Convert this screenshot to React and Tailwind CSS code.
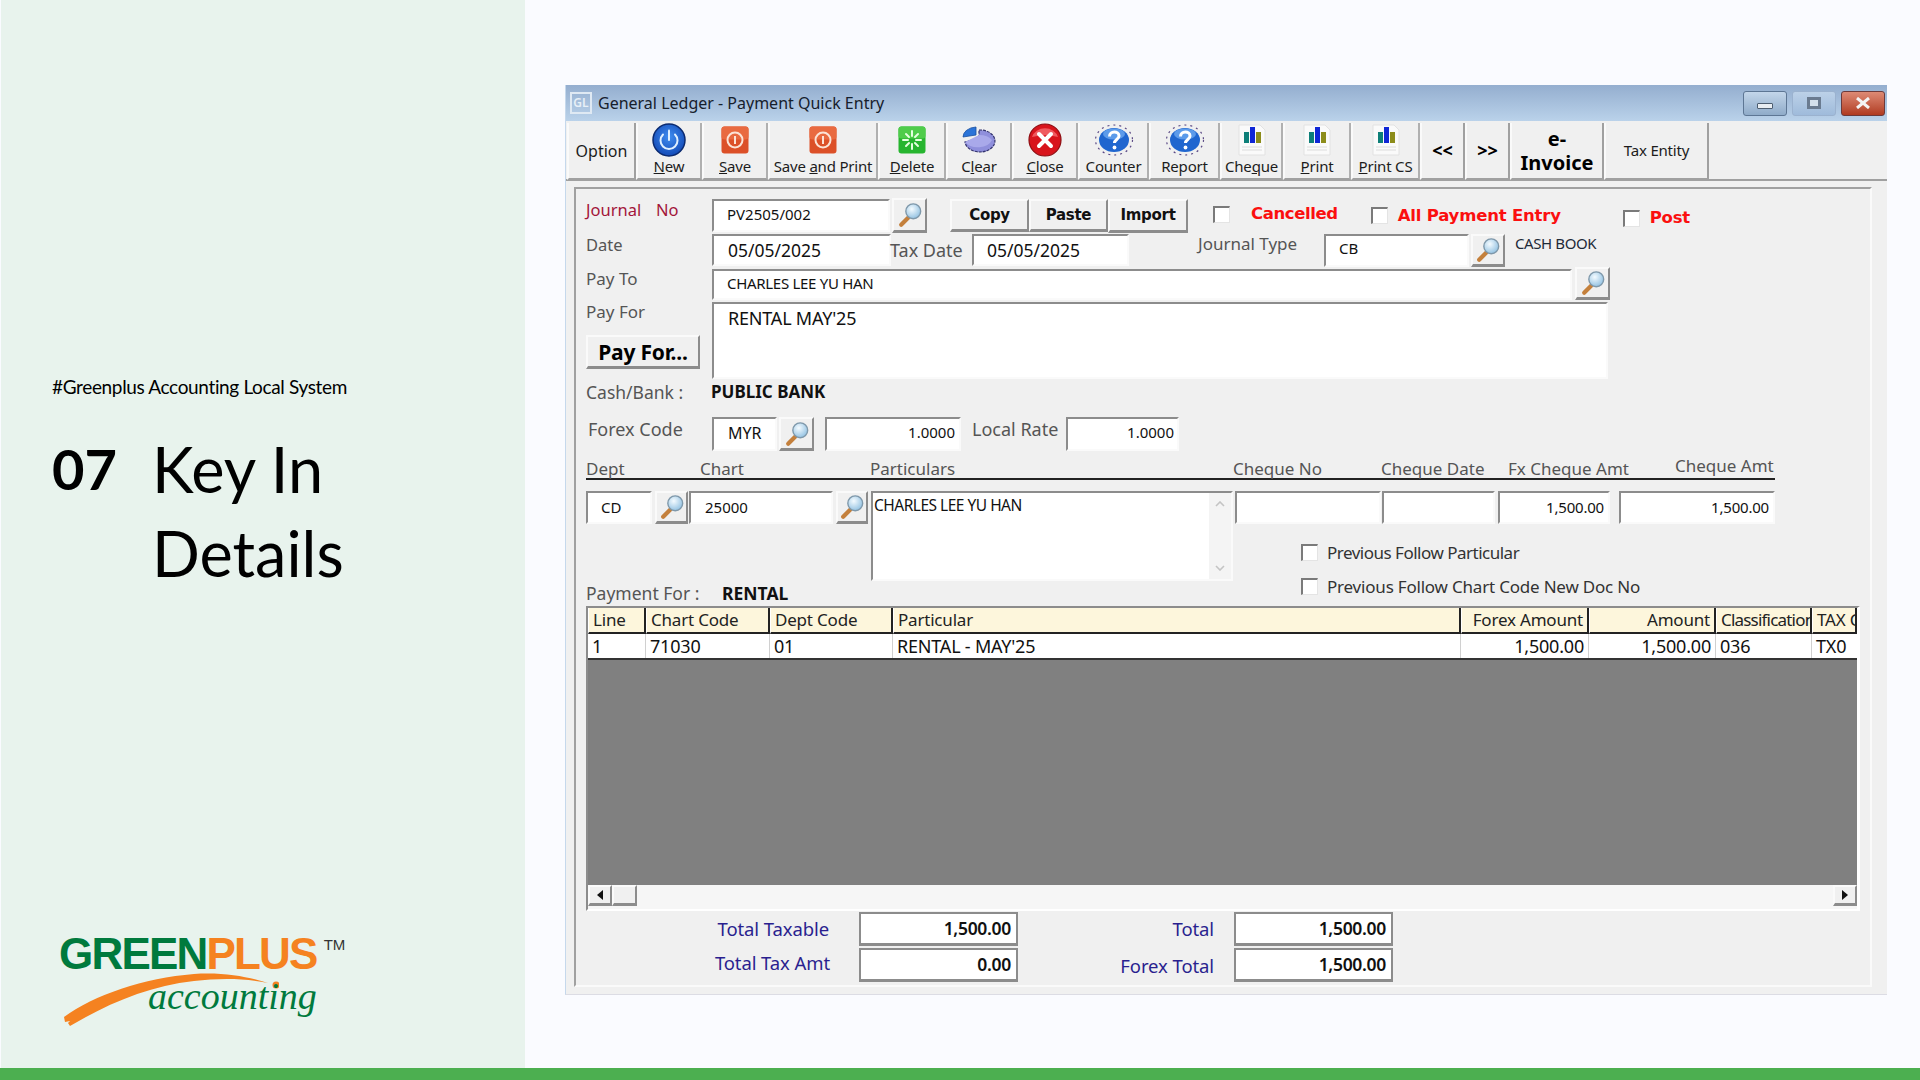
import React from 'react';

const inset = 'bg-white border-t-2 border-l-2 border-t-[#8c8c8c] border-l-[#8c8c8c] border-b-2 border-r-2 border-b-[#fafafa] border-r-[#fafafa]';
const raised = 'bg-[#f0f0f0] border-t-2 border-l-2 border-t-[#fafafa] border-l-[#fafafa] border-b-[3px] border-r-2 border-b-[#8c8c8c] border-r-[#8c8c8c]';

// magnifier used by all lookup buttons
const Mag = () => (
    <svg viewBox="0 0 28 28" className="w-[26px] h-[26px]">
        <defs>
            <radialGradient id="glass" cx="0.4" cy="0.35" r="0.8">
                <stop offset="0" stopColor="#f4fbff" />
                <stop offset="1" stopColor="#7fb6dc" />
            </radialGradient>
        </defs>
        <line x1="12" y1="17" x2="4.5" y2="24.5" stroke="#c4803c" strokeWidth="4.5" strokeLinecap="round" />
        <circle cx="17.5" cy="10" r="8" fill="url(#glass)" stroke="#7f98aa" strokeWidth="1.5" />
    </svg>
);

const SearchBtn = ({ className }) => (
    <button className={`${raised} flex items-center justify-center shrink-0 ${className}`}><Mag /></button>
);

const Box = ({ className, children }) => (
    <div className={`${inset} shrink-0 flex items-center whitespace-nowrap text-[#111] ${className}`}>{children}</div>
);

const Check = ({ className }) => (
    <span className={`inline-block w-[17px] h-[17px] bg-white border-t-2 border-l-2 border-t-[#7a7a7a] border-l-[#7a7a7a] border-b border-r border-b-[#e4e4e4] border-r-[#e4e4e4] shrink-0 ${className}`} />
);

const PowerIcon = () => (
    <svg viewBox="0 0 34 34" className="w-[34px] h-[34px]">
        <defs>
            <radialGradient id="pw" cx="0.5" cy="0.4" r="0.7">
                <stop offset="0" stopColor="#3f8df0" />
                <stop offset="1" stopColor="#0b3fae" />
            </radialGradient>
        </defs>
        <circle cx="17" cy="17" r="16" fill="url(#pw)" stroke="#0a2a70" strokeWidth="1.5" />
        <path d="M11 11.5a8.5 8.5 0 1 0 12 0" fill="none" stroke="#dff0ff" strokeWidth="2" strokeLinecap="round" />
        <line x1="17" y1="7.5" x2="17" y2="17" stroke="#dff0ff" strokeWidth="2" strokeLinecap="round" />
    </svg>
);

const SaveIcon = () => (
    <svg viewBox="0 0 28 28" className="w-[28px] h-[28px]">
        <rect x="0.5" y="0.5" width="27" height="27" rx="3" fill="#dc5028" />
        <rect x="0.5" y="0.5" width="27" height="13" rx="3" fill="#e96a40" />
        <circle cx="14" cy="14" r="7.5" fill="none" stroke="#fbe3d6" strokeWidth="2" />
        <line x1="14" y1="10" x2="14" y2="18" stroke="#fbe3d6" strokeWidth="2" />
    </svg>
);

const DeleteIcon = () => (
    <svg viewBox="0 0 28 28" className="w-[28px] h-[28px]">
        <rect x="0.5" y="0.5" width="27" height="27" rx="3" fill="#27b52f" />
        <rect x="0.5" y="0.5" width="27" height="12" rx="3" fill="#4fcc4a" />
        <g stroke="#e6ffe0" strokeWidth="2" strokeLinecap="round">
            <line x1="14" y1="5" x2="14" y2="10" />
            <line x1="14" y1="18" x2="14" y2="23" />
            <line x1="5" y1="14" x2="10" y2="14" />
            <line x1="18" y1="14" x2="23" y2="14" />
            <line x1="8" y1="8" x2="11" y2="11" />
            <line x1="17" y1="17" x2="20" y2="20" />
            <line x1="20" y1="8" x2="17" y2="11" />
            <line x1="11" y1="17" x2="8" y2="20" />
        </g>
    </svg>
);

const ClearIcon = () => (
    <svg viewBox="0 0 34 30" className="w-[34px] h-[30px]">
        <path d="M17 5 A15 11 0 1 1 3 17 L17 13 Z" fill="#8f8fdc" stroke="#34346e" strokeWidth="1.2" strokeDasharray="3 1" />
        <path d="M17 10 A15 11 0 0 1 30 15 A15 11 0 0 1 3 17 Z" fill="#a9a9ea" />
        <path d="M14 2 L14 10 L1 12 A14 10 0 0 1 14 2 Z" fill="#2b74d8" stroke="#1b4f9e" strokeWidth="0.8" />
    </svg>
);

const CloseIcon = () => (
    <svg viewBox="0 0 34 34" className="w-[34px] h-[34px]">
        <circle cx="17" cy="17" r="16" fill="#d8141c" stroke="#8e0d12" strokeWidth="1.2" />
        <path d="M4 14a13.5 12 0 0 1 26 0a30 16 0 0 0 -26 0Z" fill="#ef5a5f" />
        <path d="M11 11l12 12M23 11l-12 12" stroke="#fff" strokeWidth="4" strokeLinecap="round" />
    </svg>
);

const HelpIcon = () => (
    <svg viewBox="0 0 40 32" className="w-[40px] h-[32px]">
        <ellipse cx="20" cy="16" rx="18.5" ry="15" fill="none" stroke="#5b4a86" strokeWidth="1.2" strokeDasharray="2 4" />
        <ellipse cx="20" cy="16" rx="15" ry="12" fill="#1f66cf" />
        <ellipse cx="20" cy="10" rx="11" ry="5.5" fill="#5c9bea" />
        <path d="M15.5 12.5c0-6 9.5-6 9.5-.5c0 3.5-4.5 3.5-4.5 7" fill="none" stroke="#fff" strokeWidth="3" />
        <circle cx="20.5" cy="23.5" r="1.9" fill="#fff" />
    </svg>
);

const DocIcon = () => (
    <svg viewBox="0 0 28 32" className="w-[28px] h-[32px]">
        <path d="M1 1h21l5 5v25H1Z" fill="#fafafa" stroke="#e2e2e2" />
        <rect x="6" y="8" width="5" height="11" fill="#0d7f78" />
        <rect x="12" y="3" width="5" height="16" fill="#0f26d6" />
        <rect x="18" y="8" width="5" height="11" fill="#8c8c1a" />
        <g stroke="#dcdcdc">
            <line x1="4" y1="23" x2="24" y2="23" />
            <line x1="4" y1="26" x2="24" y2="26" />
        </g>
    </svg>
);

const ToolBtn = ({ className, icon, children }) => (
    <div className={`h-[57px] shrink-0 flex flex-col items-center bg-[#f0f0f0] border-l-2 border-l-[#fafafa] border-r-2 border-r-[#b0b0b0] border-b-2 border-b-[#a0a0a0] ${className}`}>
        <div className="h-[34px] flex items-center justify-center">{icon}</div>
        <div className="text-[15px] leading-[18px] text-[#1c1c1c] whitespace-nowrap tracking-[-0.2px]">{children}</div>
    </div>
);

const TextBtn = ({ className, children }) => (
    <div className={`h-[57px] shrink-0 flex items-center justify-center text-center bg-[#f0f0f0] border-l-2 border-l-[#fafafa] border-r-2 border-r-[#a0a0a0] border-b-2 border-b-[#a0a0a0] ${className}`}>{children}</div>
);

const WinBtn = ({ className, children }) => (
    <div className={`h-[25px] flex items-center justify-center rounded-[3px] border border-[#5d7694] ${className}`}>{children}</div>
);

const Logo = () => (
    <div className="relative ml-[7px] w-[300px] mb-[52px] font-['Liberation_Sans',sans-serif]">
        <svg viewBox="0 0 220 100" className="absolute left-0 top-0 w-[220px] h-[100px]">
            <path d="M5 86C35 64 85 47 135 43C165 41 190 46 209 52C185 47 160 47 135 50C90 55 50 72 11 95L9 92L11 90L6 91Z" fill="#f58220" />
            <circle cx="217" cy="54" r="3.5" fill="#f58220" />
        </svg>
        <div className="flex items-start">
            <div className="text-[44px] leading-[46px] font-bold tracking-[-1.8px]">
                <span className="text-[#007a3d]">GREEN</span><span className="text-[#f58220]">PLUS</span>
            </div>
            <span className="ml-[7px] mt-[6px] text-[15px] leading-[16px] text-[#333]">TM</span>
        </div>
        <div className="relative -mt-[1px] pl-[89px] text-[38px] leading-[40px] italic text-[#007a3d] font-['Liberation_Serif',serif]">accounting</div>
    </div>
);

const Sidebar = () => (
    <aside className="ml-px w-[524px] h-full flex flex-col bg-[#e8f3ed] pl-[51px] text-black">
        <div className="mt-[375px] text-[19px] leading-[24px] font-['Lato',sans-serif] tracking-[-0.35px]">#Greenplus Accounting Local System</div>
        <div className="mt-[28px] flex items-start font-['Lato',sans-serif] text-[63px] leading-[84px]">
            <div className="w-[100px] text-[56px] font-bold">07</div>
            <div>Key In<br />Details</div>
        </div>
        <div className="mt-auto"><Logo /></div>
    </aside>
);

const TitleBar = () => (
    <div className="h-[36px] flex items-center bg-gradient-to-b from-[#94aecf] to-[#bad2ea] pl-[4px] pr-[2px]">
        <div className="w-[22px] h-[22px] border-2 border-[#dfe9f3] flex items-center justify-center text-[#e8f0f7] text-[12px] font-semibold">GL</div>
        <div className="ml-[6px] text-[16px] text-[#16202c]">General Ledger - Payment Quick Entry</div>
        <div className="ml-auto flex gap-[5px]">
            <WinBtn className="w-[44px] bg-gradient-to-b from-[#c3d6ea] to-[#8fabc9]">
                <span className="block w-[16px] h-[6px] mt-[6px] bg-[#e8edf2] border border-[#4d5d70] rounded-[1px]" />
            </WinBtn>
            <WinBtn className="w-[44px] bg-gradient-to-b from-[#bcd1e8] to-[#9fbbdb] border-[#9bb2cf]">
                <span className="block w-[14px] h-[12px] border-[3px] border-[#6a7b90] bg-[#d4e0ec]" />
            </WinBtn>
            <WinBtn className="w-[44px] bg-gradient-to-b from-[#dd8a74] to-[#b03a20] border-[#6d3a3a]">
                <svg viewBox="0 0 16 12" className="w-[16px] h-[12px]"><path d="M2 1l12 10M14 1L2 11" stroke="#f4f4f4" strokeWidth="3" /></svg>
            </WinBtn>
        </div>
    </div>
);

const Toolbar = () => (
    <div className="h-[60px] pt-[2px] pl-[1px] flex bg-[#f0f0f0] border-b-2 border-b-[#a0a0a0] font-['Noto_Sans',sans-serif]">
        <TextBtn className="w-[69px] text-[16px] text-[#1c1c1c]">Option</TextBtn>
        <ToolBtn className="w-[66px]" icon={<PowerIcon />}><u>N</u>ew</ToolBtn>
        <ToolBtn className="w-[66px]" icon={<SaveIcon />}><u>S</u>ave</ToolBtn>
        <ToolBtn className="w-[110px]" icon={<SaveIcon />}>Save <u>a</u>nd Print</ToolBtn>
        <ToolBtn className="w-[68px]" icon={<DeleteIcon />}><u>D</u>elete</ToolBtn>
        <ToolBtn className="w-[66px]" icon={<ClearIcon />}>C<u>l</u>ear</ToolBtn>
        <ToolBtn className="w-[66px]" icon={<CloseIcon />}><u>C</u>lose</ToolBtn>
        <ToolBtn className="w-[71px]" icon={<HelpIcon />}>Counter</ToolBtn>
        <ToolBtn className="w-[71px]" icon={<HelpIcon />}>Report</ToolBtn>
        <ToolBtn className="w-[63px]" icon={<DocIcon />}>Che<u>q</u>ue</ToolBtn>
        <ToolBtn className="w-[68px]" icon={<DocIcon />}><u>P</u>rint</ToolBtn>
        <ToolBtn className="w-[69px]" icon={<DocIcon />}><u>P</u>rint CS</ToolBtn>
        <TextBtn className="w-[45px] text-[18px] font-bold">&lt;&lt;</TextBtn>
        <TextBtn className="w-[45px] text-[18px] font-bold">&gt;&gt;</TextBtn>
        <TextBtn className="w-[94px] text-[20px] leading-[24px] font-bold">e-<br />Invoice</TextBtn>
        <TextBtn className="w-[105px] text-[15px] text-[#1c1c1c] tracking-[-0.2px]">Tax Entity</TextBtn>
    </div>
);

const redBold = "text-[16.5px] leading-[20px] font-bold text-[#fb0f0f] font-['DejaVu_Sans',sans-serif] whitespace-nowrap";

const TopForm = () => (
    <>
        {/* journal no row */}
        <div className="flex h-[35px] items-start">
            <div className="w-[126px] flex mt-[2px] text-[16.5px] leading-[20px] text-[#a3153a]">
                <span className="w-[70px]">Journal</span><span>No</span>
            </div>
            <Box className="w-[178px] h-[33px] mt-[1px] pl-[13px] pb-[2px] text-[15px]">PV2505/002</Box>
            <SearchBtn className="w-[35px] h-[35px] ml-[2px]" />
            <div className="ml-[23px] flex text-[15px] font-bold mt-[1px] font-['DejaVu_Sans',sans-serif] tracking-[-0.3px] text-[#111]">
                <div className={`${raised} w-[79px] h-[33px] flex items-center justify-center`}>Copy</div>
                <div className={`${raised} w-[79px] h-[33px] flex items-center justify-center`}>Paste</div>
                <div className={`${raised} w-[80px] h-[34px] flex items-center justify-center`}>Import</div>
            </div>
            <Check className="ml-[25px] mt-[8px]" />
            <span className={`ml-[21px] mt-[6px] tracking-[-0.4px] ${redBold}`}>Cancelled</span>
            <Check className="ml-[33px] mt-[9px]" />
            <span className={`ml-[10px] mt-[8px] tracking-[-0.2px] ${redBold}`}>All Payment Entry</span>
            <Check className="ml-[62px] mt-[12px]" />
            <span className={`ml-[10px] mt-[10px] tracking-[-0.2px] ${redBold}`}>Post</span>
        </div>

        {/* date row */}
        <div className="flex h-[33px] items-start mt-px">
            <div className="w-[126px] text-[16.5px] leading-[20px] text-[#555] mt-px">Date</div>
            <Box className="w-[179px] h-[32px] pl-[14px] pt-px text-[17.5px]">05/05/2025</Box>
            <div className="w-[82px] text-[18px] leading-[20px] text-[#555] mt-[6px] -ml-px whitespace-nowrap">Tax Date</div>
            <Box className="w-[157px] h-[32px] pl-[13px] pt-px text-[17.5px]">05/05/2025</Box>
            <div className="ml-[69px] w-[126px] text-[17px] leading-[20px] text-[#555] whitespace-nowrap">Journal Type</div>
            <Box className="w-[145px] h-[33px] pl-[13px] pb-[4px] text-[15px]">CB</Box>
            <SearchBtn className="w-[34px] h-[33px] ml-[2px]" />
            <span className="ml-[10px] text-[15px] leading-[18px] text-[#1e2a38] tracking-[-0.4px] whitespace-nowrap">CASH BOOK</span>
        </div>

        {/* pay to row */}
        <div className="flex h-[33px] items-start">
            <div className="w-[126px] text-[17px] leading-[20px] text-[#555] mt-[2px]">Pay To</div>
            <Box className="w-[860px] h-[31px] mt-[2px] pl-[13px] pb-[3px] text-[15px] tracking-[-0.3px]">CHARLES LEE YU HAN</Box>
            <SearchBtn className="w-[35px] h-[33px] ml-[3px]" />
        </div>

        {/* pay for row */}
        <div className="flex mt-[2px] h-[77px]">
            <div className="w-[126px]">
                <div className="text-[17px] leading-[20px] text-[#555]">Pay For</div>
                <button className={`${raised} block w-[114px] h-[34px] mt-[13px] text-[21px] leading-[26px] font-bold text-black tracking-[-0.2px] whitespace-nowrap`}>Pay For...</button>
            </div>
            <div className={`${inset} w-[896px] h-[77px] pl-[14px] pt-[2px] text-[18px] leading-[24px] text-[#111] tracking-[-0.2px]`}>RENTAL MAY'25</div>
        </div>

        <div className="flex mt-[3px] h-[20px] items-center whitespace-nowrap">
            <div className="w-[125px] text-[17.5px] text-[#555]">Cash/Bank :</div>
            <div className="text-[17px] font-bold text-[#111]">PUBLIC BANK</div>
        </div>

        {/* forex row */}
        <div className="flex mt-[15px] h-[34px] items-start">
            <div className="w-[126px] pl-[2px] text-[18px] leading-[24px] text-[#555] whitespace-nowrap">Forex Code</div>
            <Box className="w-[65px] h-[34px] pl-[14px] pb-[3px] text-[16px]">MYR</Box>
            <SearchBtn className="w-[35px] h-[34px] ml-[2px]" />
            <Box className="w-[136px] h-[34px] ml-[11px] justify-end pr-[4px] pb-[3px] text-[15px]">1.0000</Box>
            <div className="w-[105px] pl-[11px] text-[18px] leading-[24px] text-[#555] whitespace-nowrap">Local Rate</div>
            <Box className="w-[113px] h-[34px] justify-end pr-[3px] pb-[3px] text-[15px]">1.0000</Box>
        </div>
    </>
);

const LineEntry = () => (
    <>
        <div className="flex mt-[8px] w-[1189px] h-[21px] border-b-2 border-b-[#222] text-[17px] leading-[20px] text-[#555] whitespace-nowrap">
            <div className="w-[114px]">Dept</div>
            <div className="w-[170px]">Chart</div>
            <div className="w-[363px]">Particulars</div>
            <div className="w-[148px]">Cheque No</div>
            <div className="w-[127px]">Cheque Date</div>
            <div className="w-[167px]">Fx Cheque Amt</div>
            <div className="-mt-[3px]">Cheque Amt</div>
        </div>

        <div className="flex mt-[11px] h-[92px] items-start">
            <Box className="w-[66px] h-[33px] pl-[13px] text-[15px]">CD</Box>
            <SearchBtn className="w-[33px] h-[33px] ml-[3px]" />
            <Box className="w-[144px] h-[33px] ml-px pl-[14px] text-[15px]">25000</Box>
            <SearchBtn className="w-[32px] h-[33px] ml-[3px]" />
            <div className={`${inset} relative w-[362px] h-[90px] ml-[3px] pt-[3px] text-[15.5px] leading-[18px] tracking-[-0.5px] text-[#111]`}>
                <div className="pl-px">CHARLES LEE YU HAN</div>
                <div className="absolute right-0 top-0 bottom-0 w-[22px] bg-[#f4f4f4] flex flex-col items-center justify-between py-[8px] text-[#c4c4c4]">
                    <svg viewBox="0 0 10 6" className="w-[10px] h-[6px]"><path d="M1 5l4-4 4 4" fill="none" stroke="currentColor" strokeWidth="1.6" /></svg>
                    <svg viewBox="0 0 10 6" className="w-[10px] h-[6px]"><path d="M1 1l4 4 4-4" fill="none" stroke="currentColor" strokeWidth="1.6" /></svg>
                </div>
            </div>
            <div className="ml-[2px]">
                <div className="flex text-[15px]">
                    <Box className="w-[146px] h-[33px]" />
                    <Box className="w-[113px] h-[33px] ml-px" />
                    <Box className="w-[112px] h-[33px] ml-[3px] justify-end pr-[4px] tracking-[-0.2px]">1,500.00</Box>
                    <Box className="w-[156px] h-[33px] ml-[9px] justify-end pr-[4px] tracking-[-0.2px]">1,500.00</Box>
                </div>
                <div className="mt-[20px] ml-[66px] flex items-center h-[17px]">
                    <Check />
                    <span className="ml-[9px] text-[17px] text-[#333] tracking-[-0.5px] whitespace-nowrap">Previous Follow Particular</span>
                </div>
                <div className="mt-[17px] ml-[66px] flex items-center h-[17px]">
                    <Check />
                    <span className="ml-[9px] text-[17px] text-[#333] tracking-[-0.2px] whitespace-nowrap">Previous Follow Chart Code New Doc No</span>
                </div>
            </div>
        </div>

        <div className="flex h-[20px] items-center whitespace-nowrap">
            <div className="w-[136px] text-[#555] text-[17.5px]">Payment For :</div>
            <div className="font-bold text-[#111] text-[17.5px]">RENTAL</div>
        </div>
    </>
);

const headCell = 'h-[26px] flex items-center px-[4px] bg-[#fdf6dc] border-r-2 border-r-[#222] border-b-2 border-b-[#222] border-l border-l-white overflow-hidden whitespace-nowrap text-[17px] text-[#222]';
const rowCell = 'h-[24px] flex items-center px-[4px] bg-white border-r border-r-[#d0d0d0] overflow-hidden whitespace-nowrap text-[18px] text-[#111]';

const DetailTable = () => (
    <div className="mt-[3px] w-[1274px] border-t-2 border-t-[#8c8c8c] border-l-2 border-l-[#8c8c8c] border-r-[3px] border-r-white border-b-2 border-b-white">
        <div className="grid grid-cols-[58px_124px_123px_568px_128px_127px_96px_45px] tracking-[-0.2px]">
            <div className={headCell}>Line</div>
            <div className={headCell}>Chart Code</div>
            <div className={headCell}>Dept Code</div>
            <div className={headCell}>Particular</div>
            <div className={`${headCell} justify-end`}>Forex Amount</div>
            <div className={`${headCell} justify-end`}>Amount</div>
            <div className={`${headCell} tracking-[-0.8px]`}>Classification</div>
            <div className={`${headCell} border-r-0`}>TAX Code</div>
            <div className={rowCell}>1</div>
            <div className={rowCell}>71030</div>
            <div className={rowCell}>01</div>
            <div className={rowCell}>RENTAL - MAY'25</div>
            <div className={`${rowCell} justify-end`}>1,500.00</div>
            <div className={`${rowCell} justify-end`}>1,500.00</div>
            <div className={rowCell}>036</div>
            <div className={`${rowCell} border-r-0`}>TX0</div>
        </div>
        <div className="h-[227px] bg-[#808080] border-t-2 border-t-[#333]" />
        <div className="h-[24px] flex bg-[#f6f6f6] border-b-[3px] border-b-[#f6f6f6]">
            <div className={`${raised} w-[24px] flex items-center justify-center`}>
                <svg viewBox="0 0 6 10" className="w-[6px] h-[10px]"><path d="M6 0v10L0 5Z" fill="#111" /></svg>
            </div>
            <div className={`${raised} w-[25px]`} />
            <div className={`${raised} w-[24px] ml-auto flex items-center justify-center`}>
                <svg viewBox="0 0 6 10" className="w-[6px] h-[10px]"><path d="M0 0v10l6-5Z" fill="#111" /></svg>
            </div>
        </div>
    </div>
);

const TotalBox = ({ className, children }) => (
    <div className={`${raised} !bg-white !border-t-[#8c8c8c] !border-l-[#8c8c8c] w-[159px] h-[34px] flex items-center justify-end pr-[5px] text-[17.5px] font-semibold text-[#111] tracking-[-0.3px] ${className}`}>{children}</div>
);

const Totals = () => (
    <div className="mt-[1px] text-[18.5px] text-[#2a1f8f] tracking-[-0.1px] whitespace-nowrap">
        <div className="flex items-center h-[34px]">
            <div className="w-[245px] text-right pr-[2px]">Total Taxable</div>
            <TotalBox className="ml-[28px]">1,500.00</TotalBox>
            <div className="w-[196px] text-right">Total</div>
            <TotalBox className="ml-[20px]">1,500.00</TotalBox>
        </div>
        <div className="flex items-center h-[34px] mt-[2px]">
            <div className="w-[245px] text-right pr-[1px] -mt-[4px]">Total Tax Amt</div>
            <TotalBox className="ml-[28px]">0.00</TotalBox>
            <div className="w-[196px] text-right mt-[2px]">Forex Total</div>
            <TotalBox className="ml-[20px]">1,500.00</TotalBox>
        </div>
    </div>
);

const LedgerWindow = () => (
    <div className="ml-[40px] mt-[85px] w-[1322px] h-[910px] bg-[#f0f0f0] border-l border-l-[#c5d8ec] border-b border-b-[#dcdce4] font-['Noto_Sans',sans-serif]">
        <TitleBar />
        <Toolbar />
        <div className="ml-[8px] mt-[6px] w-[1298px] h-[800px] pl-[10px] pt-[9px] border-t-2 border-l-2 border-t-[#a0a0a0] border-l-[#a0a0a0] border-r-2 border-b-2 border-r-[#fafafa] border-b-[#fafafa]">
            <TopForm />
            <LineEntry />
            <DetailTable />
            <Totals />
        </div>
    </div>
);

const App = () => (
    <div className="w-[1920px] h-[1080px] overflow-hidden flex flex-col bg-[#fafbff]">
        <div className="flex-1 flex min-h-0">
            <Sidebar />
            <LedgerWindow />
        </div>
        <div className="h-[12px] bg-[#4caf50]" />
    </div>
);

export default App;
